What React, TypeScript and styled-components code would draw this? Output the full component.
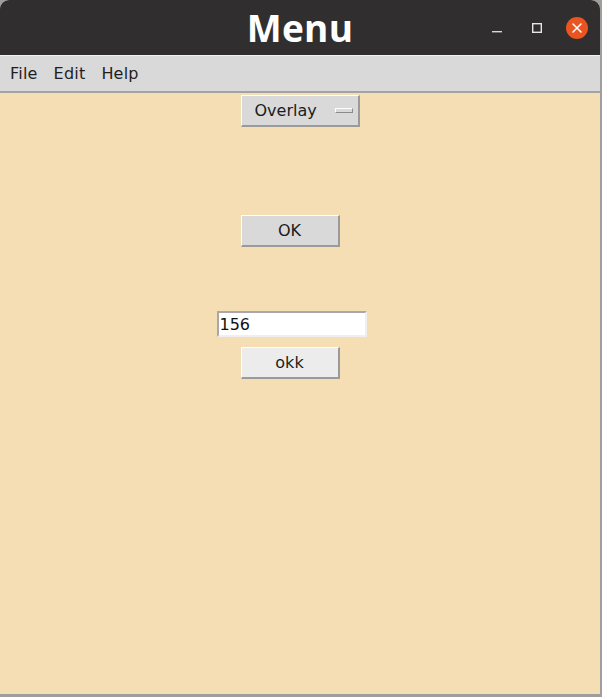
import React from "react";
import styled, { createGlobalStyle } from "styled-components";

const Global = createGlobalStyle`
  html, body { margin: 0; padding: 0; background: #a9a9a9; }
  body { width: 602px; height: 697px; overflow: hidden; font-family: "DejaVu Sans", sans-serif; }
`;

const Screen = styled.div`
  width: 602px;
  height: 697px;
  background: #9e9e9e;
  display: flex;
  flex-direction: column;
`;

const Window = styled.div`
  width: 600px;
  height: 694px;
  display: flex;
  flex-direction: column;
  background: #f5deb3;
  border-top-left-radius: 9px;
  border-top-right-radius: 9px;
  overflow: hidden;
`;

const TitleBar = styled.div`
  height: 55px;
  flex: none;
  background: #302e2f;
  display: grid;
  grid-template-columns: 1fr auto 1fr;
  align-items: center;
`;

const Title = styled.div`
  grid-column: 2;
  color: #ffffff;
  font-family: "Open Sans", sans-serif;
  font-weight: 700;
  font-size: 37px;
  line-height: 55px;
  letter-spacing: 0.3px;
`;

const Controls = styled.div`
  grid-column: 3;
  justify-self: end;
  display: flex;
  align-items: center;
  padding-right: 3px;
  height: 55px;
`;

const Ctrl = styled.div`
  width: 40px;
  height: 40px;
  display: flex;
  align-items: center;
  justify-content: center;
`;

const MenuBar = styled.div`
  height: 35px;
  flex: none;
  background: #d9d9d9;
  border-top: 1px solid #f2f2f2;
  border-bottom: 2px solid #a3a3a3;
  display: flex;
  align-items: center;
  padding-left: 2px;
`;

const MenuItem = styled.span`
  font-family: "DejaVu Sans", sans-serif;
  font-size: 16px;
  color: #1f1f1f;
  padding: 0 8px;
  line-height: 35px;
  letter-spacing: 0.2px;
`;

const Content = styled.div`
  flex: 1;
  display: flex;
  flex-direction: column;
  align-items: center;
  padding-top: 2px;
`;

const RaisedButton = styled.div<{ $bg: string; $w: number; $shift: number; $mt: number }>`
  box-sizing: border-box;
  width: ${(p) => p.$w}px;
  height: 32px;
  margin-top: ${(p) => p.$mt}px;
  margin-right: ${(p) => p.$shift}px;
  background: ${(p) => p.$bg};
  border-top: 1px solid #ffffff;
  border-left: 1px solid #ffffff;
  border-right: 2px solid #9a9a9a;
  border-bottom: 2px solid #9a9a9a;
  display: flex;
  align-items: center;
  justify-content: center;
  font-family: "DejaVu Sans", sans-serif;
  font-size: 16px;
  color: #1c1c1c;
`;

const MenuButton = styled(RaisedButton)`
  justify-content: flex-start;
  padding-left: 13px;
`;

const Indicator = styled.span`
  box-sizing: border-box;
  width: 18px;
  height: 5px;
  margin-left: auto;
  margin-right: 5px;
  background: #d9d9d9;
  border-top: 1px solid #ffffff;
  border-left: 1px solid #ffffff;
  border-right: 1px solid #8a8a8a;
  border-bottom: 1px solid #8a8a8a;
`;

const Entry = styled.div`
  box-sizing: border-box;
  width: 150px;
  height: 26px;
  margin-top: 64px;
  margin-right: 17px;
  background: #ffffff;
  border-top: 2px solid #a8a8a8;
  border-left: 2px solid #a8a8a8;
  border-right: 2px solid #efefef;
  border-bottom: 2px solid #efefef;
  display: flex;
  align-items: center;
  padding-left: 1px;
  font-family: "DejaVu Sans", sans-serif;
  font-size: 16px;
  color: #111;
`;

export default function App() {
  return (
    <>
      <Global />
      <Screen>
        <Window>
          <TitleBar>
            <Title>Menu</Title>
            <Controls>
              <Ctrl>
                <svg width="12" height="12" viewBox="0 0 12 12">
                  <rect x="1" y="9" width="10" height="1.4" fill="#d8d8d8" />
                </svg>
              </Ctrl>
              <Ctrl>
                <svg width="12" height="12" viewBox="0 0 12 12">
                  <rect x="1.7" y="1.7" width="8.6" height="8.6" fill="none" stroke="#e6e6e6" strokeWidth="1.4" />
                </svg>
              </Ctrl>
              <Ctrl>
                <svg width="22" height="22" viewBox="0 0 22 22">
                  <circle cx="11" cy="11" r="11" fill="#e95420" />
                  <path d="M7 7 L15 15 M15 7 L7 15" stroke="#ffffff" strokeWidth="1.6" strokeLinecap="round" />
                </svg>
              </Ctrl>
            </Controls>
          </TitleBar>
          <MenuBar>
            <MenuItem>File</MenuItem>
            <MenuItem>Edit</MenuItem>
            <MenuItem>Help</MenuItem>
          </MenuBar>
          <Content>
            <MenuButton $bg="#d9d9d9" $w={119} $shift={0} $mt={0}>
              Overlay
              <Indicator />
            </MenuButton>
            <RaisedButton $bg="#d9d9d9" $w={99} $shift={20} $mt={88}>OK</RaisedButton>
            <Entry>156</Entry>
            <RaisedButton $bg="#ececec" $w={99} $shift={20} $mt={10}>okk</RaisedButton>
          </Content>
        </Window>
      </Screen>
    </>
  );
}
